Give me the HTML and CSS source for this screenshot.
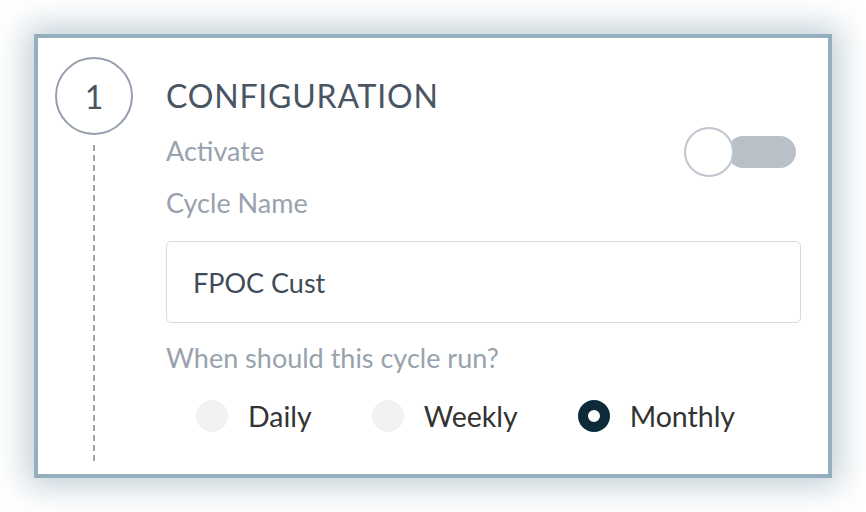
FILE: index.html
```html
<!DOCTYPE html>
<html lang="en">
<head>
<meta charset="UTF-8">
<meta name="viewport" content="width=device-width, initial-scale=1.0">
<title>Cycle Configuration</title>
<link rel="stylesheet" href="styles.css">
</head>
<body>
<!-- Paso 1 -->
<div class="card">
 <div class="rail">
 <div class="step-num">1</div>
 <div class="step-line"></div>
 </div>
 <div class="content">
 <h2 class="title">CONFIGURATION</h2>
 <div class="row-activate">
 <span class="label label-activate">Activate</span>
 <div class="toggle">
 <div class="toggle-track"></div>
 <div class="toggle-knob"></div>
 </div>
 </div>
 <div class="label label-name">Cycle Name</div>
 <div class="input">FPOC Cust</div>
 <div class="label label-when">When should this cycle run?</div>
 <div class="radios">
 <div class="radio"><span class="dot"></span>Daily</div>
 <div class="radio"><span class="dot"></span>Weekly</div>
 <div class="radio"><span class="dot checked"></span>Monthly</div>
 </div>
 </div>
</div>
</body>
</html>
```
FILE: styles.css
```css
body {
 margin: 0;
 padding: 34px 0 34px 34px;
 background: #fff;
 font-family: Lato, "Open Sans", sans-serif;
}
.card {
 box-sizing: border-box;
 width: 798px;
 height: 444px;
 border: 4px solid #94b0bf;
 background: #fff;
 box-shadow: 0 0 30px 8px rgba(70, 110, 135, 0.33);
 display: flex;
 padding: 19px 27px 9px 17px;
}
.rail {
 width: 78px;
 margin-right: 33px;
 display: flex;
 flex-direction: column;
}
.step-num {
 box-sizing: border-box;
 width: 78px;
 height: 78px;
 border: 2px solid #959fad;
 border-radius: 50%;
 display: flex;
 align-items: center;
 justify-content: center;
 font-size: 32px;
 color: #4a5563;
}
.step-line {
 flex: 1;
 width: 2px;
 margin: 10px 0 0 38px;
 background: repeating-linear-gradient(to bottom, #9aa3ae 0 6px, transparent 6px 10px);
}
.content {
 flex: 1;
}
.title {
 margin: 0;
 font-size: 32px;
 font-weight: 400;
 line-height: 78px;
 letter-spacing: 0.8px;
 color: #4a5563;
}
.label {
 font-size: 27px;
 line-height: 30px;
 color: #98a2ae;
}
.row-activate {
 display: flex;
 justify-content: space-between;
 align-items: center;
 height: 34px;
}
.label-activate {
 margin-bottom: 3px;
}
.toggle {
 position: relative;
 width: 112px;
 height: 50px;
 margin-right: 5px;
}
.toggle-track {
 position: absolute;
 right: 0;
 top: 9px;
 width: 69px;
 height: 32px;
 border-radius: 16px;
 background: #b9c0c8;
}
.toggle-knob {
 position: absolute;
 left: 0;
 top: 0;
 box-sizing: border-box;
 width: 50px;
 height: 50px;
 border-radius: 50%;
 border: 2px solid #c0c6ce;
 background: #fff;
}
.label-name {
 margin-top: 18.5px;
}
.input {
 box-sizing: border-box;
 height: 82px;
 margin-top: 23.5px;
 padding-left: 26px;
 border: 1.5px solid #dadada;
 border-radius: 5px;
 display: flex;
 align-items: center;
 font-size: 27px;
 color: #3f4b58;
}
.label-when {
 margin-top: 19.5px;
}
.radios {
 display: flex;
 gap: 60px;
 margin-top: 27.5px;
 padding-left: 30px;
}
.radio {
 display: flex;
 align-items: center;
 gap: 20px;
 height: 32px;
 font-size: 28.5px;
 color: #333;
}
.dot {
 box-sizing: border-box;
 width: 32px;
 height: 32px;
 border-radius: 50%;
 background: #f2f2f2;
}
.dot.checked {
 background: #fff;
 border: 10px solid #0d2a3a;
}
```
